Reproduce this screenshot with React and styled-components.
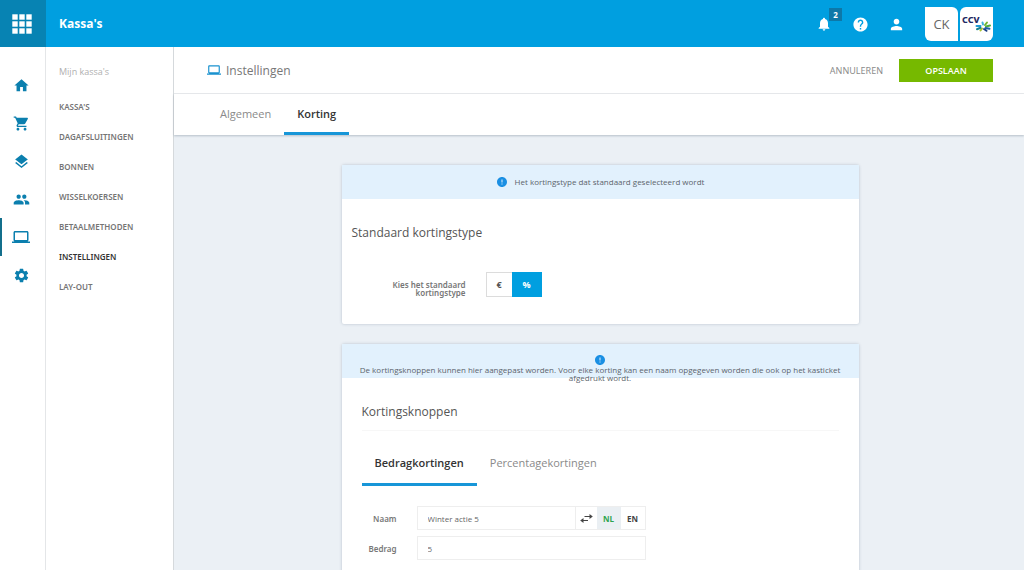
import React, { useState } from "react";
import styled, { createGlobalStyle } from "styled-components";
import {
  MdHome,
  MdShoppingCart,
  MdLayers,
  MdPeople,
  MdLaptop,
  MdSettings,
  MdNotifications,
  MdHelp,
  MdPerson,
  MdError,
} from "react-icons/md";

const GlobalStyle = createGlobalStyle`
  *, *::before, *::after { box-sizing: border-box; }
  body {
    margin: 0;
    background: #ebf0f5;
    color: #555;
    font-family: "Open Sans", "Noto Sans", sans-serif;
    font-size: 12px;
  }
  button, input { font: inherit; color: inherit; }
  button { border: 0; padding: 0; background: none; cursor: pointer; }
  a { color: inherit; text-decoration: none; }
  h1, h2, p { margin: 0; font-weight: 400; }
`;

const Page = styled.div`
  display: flex;
  flex-direction: column;
  height: 100vh;
  overflow: hidden;
`;

const TopBar = styled.header`
  display: flex;
  align-items: center;
  flex: none;
  height: 47px;
  padding-right: 31px;
  background: #009fe0;
  color: #fff;
`;

const AppsButton = styled.button`
  display: grid;
  place-items: center;
  width: 46px;
  height: 100%;
  padding-right: 2px;
  background: #0783b3;
  color: #fff;
`;

const AppTitle = styled.h1`
  flex: 1;
  padding-left: 13px;
  font-size: 12px;
  font-weight: 700;
`;

const TopActions = styled.div`
  display: flex;
  align-items: center;
  gap: 20px;
  margin-right: 21px;
`;

const IconButton = styled.button`
  position: relative;
  display: grid;
  place-items: center;
  width: 16px;
  height: 16px;
  color: #fff;
`;

const Badge = styled.span`
  position: absolute;
  top: -8px;
  left: 13px;
  width: 13px;
  height: 13px;
  background: #0d78a8;
  font-size: 8px;
  line-height: 13px;
  font-weight: 700;
  text-align: center;
`;

const Accounts = styled.div`
  display: flex;
  gap: 2px;
`;

const AccountTile = styled.a`
  display: grid;
  place-items: center;
  width: 33px;
  height: 34px;
  background: #fff;
  color: #666;
  font-size: 13px;
  border-radius: ${(p) => (p.$side === "left" ? "0 6px 0 6px" : "6px 0 6px 0")};
`;

const Body = styled.div`
  display: flex;
  flex: 1;
  min-height: 0;
`;

const Rail = styled.nav`
  display: flex;
  flex-direction: column;
  flex: none;
  width: 46px;
  padding-top: 19px;
  background: #fff;
  border-right: 1px solid #e4e6e8;
`;

const RailLink = styled.a`
  display: grid;
  place-items: center;
  height: 38px;
  padding-right: 5px;
  color: #0b7fae;
  border-left: 2px solid ${(p) => (p.$active ? "#136f8c" : "transparent")};
`;

const SubMenu = styled.nav`
  display: flex;
  flex-direction: column;
  flex: none;
  width: 128px;
  padding: 15px 13px;
  background: #fff;
  border-right: 1px solid #d5d9dc;
  font-family: "Noto Sans", sans-serif;
`;

const SubMenuTitle = styled.h2`
  margin-bottom: 10px;
  font-family: "Open Sans", sans-serif;
  font-size: 9px;
  line-height: 20px;
  color: #b0b0b0;
`;

const SubMenuLink = styled.a`
  font-size: 8px;
  line-height: 30px;
  font-weight: 600;
  text-transform: uppercase;
  color: ${(p) => (p.$active ? "#333" : "#757575")};
`;

const Main = styled.main`
  display: flex;
  flex-direction: column;
  flex: 1;
  min-width: 0;
`;

const PageHeader = styled.div`
  display: flex;
  align-items: center;
  flex: none;
  height: 47px;
  padding: 0 31px 0 33px;
  background: #fff;
  border-bottom: 1px solid #e9ebed;
`;

const PageTitle = styled.h2`
  display: flex;
  align-items: center;
  gap: 5px;
  flex: 1;
  font-size: 12px;
  color: #777;
  svg { color: #1a92cf; }
`;

const CancelButton = styled.button`
  font-family: "Noto Sans", sans-serif;
  font-size: 9px;
  margin-right: 16px;
  color: #8c8c8c;
`;

const SaveButton = styled.button`
  width: 94px;
  height: 23px;
  background: #76b900;
  color: #fff;
  font-size: 9px;
  font-weight: 600;
`;

const TabBar = styled.div`
  display: flex;
  flex: none;
  height: ${(p) => p.$height}px;
  padding-left: ${(p) => p.$indent || 0}px;
  background: #fff;
  box-shadow: ${(p) => (p.$raised ? "0 1px 2px rgba(60, 80, 100, 0.3)" : "none")};
`;

const Tab = styled.button`
  padding: 0 13px;
  font-size: 11px;
  font-weight: ${(p) => (p.$active ? 600 : 400)};
  color: ${(p) => (p.$active ? "#333" : "#8a8a8a")};
  border-bottom: 3px solid ${(p) => (p.$active ? "#1796d8" : "transparent")};
`;

const Content = styled.div`
  display: flex;
  flex-direction: column;
  gap: 20px;
  flex: 1;
  min-height: 0;
  overflow: hidden;
  padding: 30px 24px 0 26px;
`;

const Card = styled.section`
  flex: none;
  width: 100%;
  max-width: 517px;
  min-height: ${(p) => p.$minHeight}px;
  margin: 0 auto;
  background: #fff;
  border-radius: 2px;
  box-shadow: 0 0 3px rgba(60, 80, 110, 0.3);
`;

const Notice = styled.div`
  height: 34px;
  padding: ${(p) => (p.$stacked ? "10px 14px 0" : "0 14px")};
  display: flex;
  flex-direction: ${(p) => (p.$stacked ? "column" : "row")};
  align-items: center;
  justify-content: ${(p) => (p.$stacked ? "flex-start" : "center")};
  gap: ${(p) => (p.$stacked ? 0 : 7)}px;
  background: #e2f1fd;
  color: #5c646c;
  font-size: 8px;
  line-height: 8px;
  text-align: center;
  svg { flex: none; color: #1a8fe3; }
`;

const CardTitle = styled.h2`
  font-size: 12px;
  line-height: 20px;
  color: #555;
`;

const TypeBody = styled.div`
  padding: 24px 10px 27px;
`;

const TypeRow = styled.div`
  display: flex;
  align-items: center;
  gap: 20px;
  margin-top: 29px;
`;

const TypeLabel = styled.span`
  width: 114px;
  padding-top: 8px;
  font-family: "Noto Sans", sans-serif;
  font-size: 8px;
  line-height: 8px;
  font-weight: 600;
  text-align: right;
  color: #777;
`;

const Toggle = styled.div`
  display: flex;
  height: 25px;
  border: 1px solid #dcdcdc;
`;

const ToggleButton = styled.button`
  width: ${(p) => (p.$active ? 30 : 25)}px;
  margin: ${(p) => (p.$active ? "-1px -1px -1px 0" : "0")};
  background: ${(p) => (p.$active ? "#009fe0" : "#fff")};
  color: ${(p) => (p.$active ? "#fff" : "#555")};
  font-size: 9px;
  font-weight: 700;
`;

const ButtonsBody = styled.div`
  padding: 24px 20px;
`;

const TitleRule = styled.div`
  padding-bottom: 8px;
  margin-bottom: 11px;
  border-bottom: 1px solid #f7f7f7;
`;

const Form = styled.form`
  display: flex;
  flex-direction: column;
  gap: 6px;
  padding-top: 20px;
`;

const Field = styled.div`
  display: flex;
  align-items: center;
`;

const FieldLabel = styled.label`
  width: 35px;
  margin-right: 20px;
  font-family: "Noto Sans", sans-serif;
  font-size: 8px;
  font-weight: 600;
  text-align: right;
  color: #777;
`;

const InputGroup = styled.div`
  display: flex;
  width: 229px;
  height: 24px;
  border: 1px solid #eeeeee;
`;

const TextInput = styled.input`
  flex: 1;
  min-width: 0;
  padding: 0 10px;
  border: 0;
  background: transparent;
  font-size: 8px;
  color: #666;
`;

const LanguageButton = styled.button`
  display: grid;
  place-items: center;
  width: 24px;
  background: ${(p) => (p.$active ? "#eaeff3" : "#fff")};
  color: ${(p) => (p.$active ? "#2fa44f" : "#444")};
  font-size: 8px;
  font-weight: 700;
`;

const SwapButton = styled.button`
  display: grid;
  place-items: center;
  width: 22px;
  border-left: 1px solid #eeeeee;
  color: #444;
`;

function AppsIcon() {
  return (
    <svg width="20" height="20" viewBox="0 0 20 20" fill="currentColor" aria-hidden="true">
      {[0, 7, 14].map((y) =>
        [0, 7, 14].map((x) => <rect key={`${x}-${y}`} x={x + 0.3} y={y + 0.3} width="5.4" height="5.4" />)
      )}
    </svg>
  );
}

function SwapIcon() {
  return (
    <svg width="13" height="9" viewBox="0 0 13 9" fill="none" stroke="currentColor" aria-hidden="true">
      <path d="M4.500 2.500H11M2 6.500H8" strokeWidth="1.200" />
      <path d="M9.500 0L12.800 2.500L9.500 5ZM3.500 4L0.200 6.500L3.500 9Z" fill="currentColor" stroke="none" />
    </svg>
  );
}

function CcvLogo() {
  return (
    <svg width="31" height="24" viewBox="0 0 31 24" aria-label="CCV">
      <text x="1" y="11" fontFamily="Noto Sans, sans-serif" fontSize="9" fontWeight="800" fill="#1f2a63">
        CCV
      </text>
      <g fill="none" strokeWidth="2" strokeLinecap="round">
        <path d="M19.500 14L15.500 14" stroke="#1d9ad6" />
        <path d="M22 12.500L21.500 10.500" stroke="#3fb3d9" />
        <path d="M24 13L26 10.500" stroke="#6fb52c" />
        <path d="M25 14.500L29 13.500" stroke="#4fae3c" />
        <path d="M24.500 16L28.500 16.800" stroke="#1d5fa8" />
        <path d="M23 17L25.500 18.800" stroke="#1b3f85" />
        <path d="M21 16.500L19.500 18.500" stroke="#a8c22c" />
        <path d="M19.500 15.800L16 17.200" stroke="#16828f" />
      </g>
    </svg>
  );
}

const railItems = [
  { label: "Home", Icon: MdHome, size: 17 },
  { label: "Winkel", Icon: MdShoppingCart, size: 17 },
  { label: "Producten", Icon: MdLayers, size: 17 },
  { label: "Klanten", Icon: MdPeople, size: 17 },
  { label: "Kassa's", Icon: MdLaptop, size: 18, active: true },
  { label: "Beheer", Icon: MdSettings, size: 17 },
];

const menuItems = ["Kassa's", "Dagafsluitingen", "Bonnen", "Wisselkoersen", "Betaalmethoden", "Instellingen", "Lay-out"];

export default function App() {
  const [tab, setTab] = useState("Korting");
  const [kind, setKind] = useState("Bedragkortingen");
  const [type, setType] = useState("%");
  const [lang, setLang] = useState("NL");

  return (
    <Page>
      <GlobalStyle />
      <TopBar>
        <AppsButton aria-label="Apps">
          <AppsIcon />
        </AppsButton>
        <AppTitle>Kassa's</AppTitle>
        <TopActions>
          <IconButton aria-label="Meldingen">
            <MdNotifications size={16} />
            <Badge>2</Badge>
          </IconButton>
          <IconButton aria-label="Help">
            <MdHelp size={17} />
          </IconButton>
          <IconButton aria-label="Profiel">
            <MdPerson size={17} />
          </IconButton>
        </TopActions>
        <Accounts>
          <AccountTile href="#account" $side="left">CK</AccountTile>
          <AccountTile href="#ccv" $side="right">
            <CcvLogo />
          </AccountTile>
        </Accounts>
      </TopBar>
      <Body>
        <Rail aria-label="Hoofdmenu">
          {railItems.map(({ label, Icon, size, active }) => (
            <RailLink key={label} href="#" aria-label={label} $active={active}>
              <Icon size={size} />
            </RailLink>
          ))}
        </Rail>
        <SubMenu aria-label="Kassa's">
          <SubMenuTitle>Mijn kassa's</SubMenuTitle>
          {menuItems.map((item) => (
            <SubMenuLink key={item} href="#" $active={item === "Instellingen"}>
              {item}
            </SubMenuLink>
          ))}
        </SubMenu>
        <Main>
          <PageHeader>
            <PageTitle>
              <MdLaptop size={14} />
              Instellingen
            </PageTitle>
            <CancelButton>ANNULEREN</CancelButton>
            <SaveButton>OPSLAAN</SaveButton>
          </PageHeader>
          <TabBar $height={41} $indent={33} $raised>
            {["Algemeen", "Korting"].map((name) => (
              <Tab key={name} $active={tab === name} onClick={() => setTab(name)}>
                {name}
              </Tab>
            ))}
          </TabBar>
          <Content>
            <Card $minHeight={158}>
              <Notice>
                <MdError size={12} />
                <p>Het kortingstype dat standaard geselecteerd wordt</p>
              </Notice>
              <TypeBody>
                <CardTitle>Standaard kortingstype</CardTitle>
                <TypeRow>
                  <TypeLabel id="type-label">Kies het standaard kortingstype</TypeLabel>
                  <Toggle role="group" aria-labelledby="type-label">
                    {["€", "%"].map((sign) => (
                      <ToggleButton key={sign} $active={type === sign} onClick={() => setType(sign)}>
                        {sign}
                      </ToggleButton>
                    ))}
                  </Toggle>
                </TypeRow>
              </TypeBody>
            </Card>
            <Card $minHeight={300}>
              <Notice $stacked>
                <MdError size={12} />
                <p>
                  De kortingsknoppen kunnen hier aangepast worden. Voor elke korting kan een naam opgegeven worden die
                  ook op het kasticket afgedrukt wordt.
                </p>
              </Notice>
              <ButtonsBody>
                <TitleRule>
                  <CardTitle>Kortingsknoppen</CardTitle>
                </TitleRule>
                <TabBar $height={44}>
                  {["Bedragkortingen", "Percentagekortingen"].map((name) => (
                    <Tab key={name} $active={kind === name} onClick={() => setKind(name)}>
                      {name}
                    </Tab>
                  ))}
                </TabBar>
                <Form onSubmit={(e) => e.preventDefault()}>
                  <Field>
                    <FieldLabel htmlFor="name">Naam</FieldLabel>
                    <InputGroup>
                      <TextInput id="name" defaultValue="Winter actie 5" />
                      <SwapButton type="button" aria-label="Vertalen">
                        <SwapIcon />
                      </SwapButton>
                      {["NL", "EN"].map((code) => (
                        <LanguageButton key={code} type="button" $active={lang === code} onClick={() => setLang(code)}>
                          {code}
                        </LanguageButton>
                      ))}
                    </InputGroup>
                  </Field>
                  <Field>
                    <FieldLabel htmlFor="amount">Bedrag</FieldLabel>
                    <InputGroup>
                      <TextInput id="amount" defaultValue="5" />
                    </InputGroup>
                  </Field>
                </Form>
              </ButtonsBody>
            </Card>
          </Content>
        </Main>
      </Body>
    </Page>
  );
}
